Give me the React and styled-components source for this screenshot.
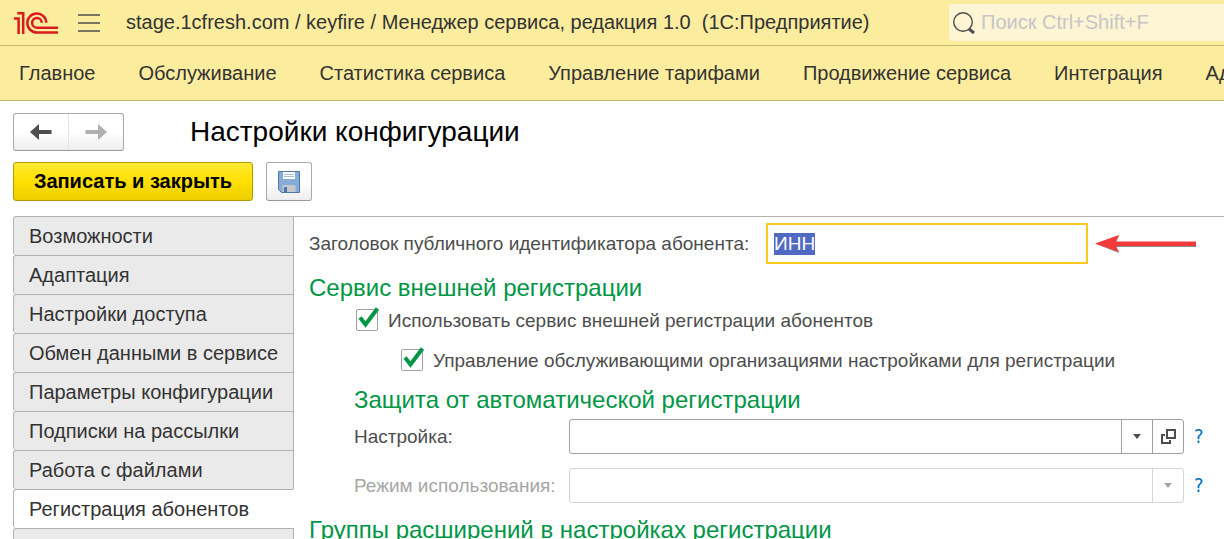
import { useEffect, useRef, useState } from "react";
import { createGlobalStyle, styled } from "styled-components";

const GlobalStyle = createGlobalStyle`
  * {
    box-sizing: border-box;
  }
  body {
    margin: 0;
    background: #fff;
    overflow: hidden;
  }
  body, button, input, select {
    font-family: "Liberation Sans", Arial, sans-serif;
    font-size: 20px;
    line-height: 23px;
    color: #333;
  }
  svg {
    display: block;
    flex-shrink: 0;
  }
`;

const Header = styled.header`
  display: flex;
  align-items: center;
  height: 46px;
  padding-left: 14px;
  background: #fbec9e;
  border-bottom: 1px solid #c6b869;
`;

const MenuButton = styled.button`
  margin: 0 26px 0 20px;
  padding: 0;
  border: 0;
  background: none;
`;

const AppTitle = styled.span`
  flex: 1;
  white-space: pre;
`;

const Search = styled.label`
  display: flex;
  align-items: center;
  gap: 6px;
  width: 275px;
  height: 37px;
  padding-left: 4px;
  background: #fdf5d3;
  border-radius: 3px 0 0 3px;
`;

const SearchInput = styled.input`
  flex: 1;
  min-width: 0;
  padding: 0;
  border: 0;
  outline: 0;
  background: none;
  &::placeholder {
    color: #c6c6c6;
  }
`;

const Sections = styled.nav`
  display: flex;
  align-items: center;
  gap: 43px;
  height: 55px;
  padding-left: 19px;
  overflow: hidden;
  background: #fbec9e;
  border-bottom: 1px solid #c6b869;
`;

const SectionLink = styled.a`
  color: #333;
  text-decoration: none;
  white-space: nowrap;
`;

const TitleBar = styled.div`
  display: flex;
  align-items: center;
  gap: 66px;
  padding: 12px 13px 11px;
`;

const History = styled.div`
  display: flex;
  width: 111px;
  height: 38px;
  border: 1px solid #aaa;
  border-bottom-color: #999;
  border-radius: 3px;
  background: linear-gradient(#fff 50%, #ededed);
`;

const HistoryButton = styled.button`
  display: flex;
  flex: 1;
  align-items: center;
  justify-content: center;
  padding: 0;
  border: 0;
  background: none;
  color: ${({ disabled }) => (disabled ? "#b0b0b0" : "#4d4d4d")};
  & + & {
    border-left: 1px solid #e4e4e4;
  }
`;

const PageTitle = styled.h1`
  margin: 0;
  font-size: 28px;
  font-weight: 400;
  line-height: 32px;
  color: #000;
`;

const Commands = styled.div`
  display: flex;
  gap: 13px;
  padding: 0 13px 15px;
`;

const SubmitButton = styled.button`
  width: 240px;
  height: 39px;
  padding: 0;
  border: 1px solid #b09c00;
  border-radius: 3px;
  background: linear-gradient(#ffe934, #ffe000 50%, #ecce00);
  font-weight: 700;
  color: #000;
`;

const SaveButton = styled.button`
  display: flex;
  align-items: center;
  justify-content: center;
  width: 46px;
  height: 39px;
  padding: 0;
  border: 1px solid #aaa;
  border-bottom-color: #999;
  border-radius: 3px;
  background: linear-gradient(#fff 50%, #ededed);
`;

const Body = styled.main`
  display: flex;
  padding-left: 13px;
`;

const Tabs = styled.div`
  display: flex;
  flex-direction: column;
  width: 281px;
  flex-shrink: 0;
`;

const Tab = styled.button`
  height: 39px;
  padding: 0 15px;
  border: solid #b1b1b1;
  border-width: 1px 1px 0;
  border-right-color: ${({ $active }) => ($active ? "#fff" : "#b1b1b1")};
  border-radius: 3px 0 0 3px;
  background: ${({ $active }) => ($active ? "#fff" : "#eaeaea")};
  text-align: left;
  white-space: nowrap;
`;

const Panel = styled.section`
  flex: 1;
  min-width: 0;
  padding: 6px 15px 0;
  border-top: 1px solid #b1b1b1;
  font-size: 19px;
  color: #4d4d4d;
`;

const Row = styled.div`
  display: flex;
  align-items: center;
`;

const TitleLabel = styled.label`
  min-width: 457px;
  white-space: nowrap;
`;

const TitleInput = styled.input`
  width: 322px;
  height: 41px;
  margin-right: 7px;
  padding: 0 6px;
  border: 2px solid #fcca1c;
  outline: 0;
  font-size: 19px;
  &::selection {
    background: #5069c3;
    color: #fff;
  }
`;

const GroupTitle = styled.h2`
  margin: 0;
  font-size: 24px;
  font-weight: 400;
  line-height: 24px;
  color: #009646;
`;

const Group = styled.div`
  padding: ${({ $indent }) => ($indent ? "8px 0 0 45px" : "12px 0 0")};
`;

const CheckLabel = styled.label`
  display: flex;
  align-items: center;
  gap: 10px;
  height: 40px;
  padding-left: ${({ $level }) => $level * 45}px;
`;

const CheckFrame = styled.span`
  display: grid;
  width: 24px;
  height: 24px;
  & > * {
    grid-area: 1 / 1;
  }
  & > svg {
    overflow: visible;
    pointer-events: none;
    visibility: hidden;
  }
  & > input:checked + svg {
    visibility: visible;
  }
`;

const CheckInput = styled.input`
  appearance: none;
  width: 22px;
  height: 22px;
  margin: 1px 0 0 2px;
  border: 1px solid #a0a0a0;
  border-radius: 2px;
  background: #fff;
`;

const FieldRow = styled.div`
  display: grid;
  grid-template-columns: 215px 1fr 25px;
  align-items: center;
  margin: ${({ $disabled }) => ($disabled ? "14px" : "7px")} 0 0;
  color: ${({ $disabled }) => ($disabled ? "#a6a6a6" : "#4d4d4d")};
`;

const Combo = styled.div`
  --line: ${({ $disabled }) => ($disabled ? "#d4d4d4" : "#a0a0a0")};
  display: grid;
  grid-template-columns: 1fr 31px ${({ $open }) => ($open ? "31px" : "")};
  height: 35px;
  border: 1px solid var(--line);
  border-radius: 3px;
`;

const ComboSelect = styled.select`
  grid-area: 1 / 1 / 2 / 3;
  appearance: none;
  min-width: 0;
  padding: 0 6px;
  border: 0;
  outline: 0;
  background: none;
`;

const ComboArrow = styled.span`
  grid-area: 1 / 2;
  display: flex;
  align-items: center;
  justify-content: center;
  border-left: 1px solid var(--line);
  pointer-events: none;
`;

const OpenButton = styled.button`
  grid-area: 1 / 3;
  display: flex;
  align-items: center;
  justify-content: center;
  padding: 0;
  border: 0;
  border-left: 1px solid var(--line);
  background: none;
`;

const HelpLink = styled.a`
  padding-left: 10px;
  font-family: "DejaVu Sans Condensed", "DejaVu Sans", sans-serif;
  font-size: 20px;
  color: #0072bc;
  text-decoration: none;
`;

const NextGroup = styled.div`
  padding-top: 15px;
`;

const sections = [
  "Главное",
  "Обслуживание",
  "Статистика сервиса",
  "Управление тарифами",
  "Продвижение сервиса",
  "Интеграция",
  "Администрирование",
];

const tabs = [
  "Возможности",
  "Адаптация",
  "Настройки доступа",
  "Обмен данными в сервисе",
  "Параметры конфигурации",
  "Подписки на рассылки",
  "Работа с файлами",
  "Регистрация абонентов",
  "",
];

function Logo() {
  return (
    <svg width="44" height="22" viewBox="0 0 44 22" fill="none" stroke="#d91a21" strokeWidth="2.5">
      <path d="M3.300 1.300H9.200V22M0 6.400H4.600V22" />
      <path d="M32.300 10.800A9.500 9.500 0 1 0 22.800 20.500H44" />
      <path d="M27.700 10.800A4.800 4.800 0 1 0 22.800 15.700H44" />
    </svg>
  );
}

function Arrow({ back }) {
  return (
    <svg width="22" height="16" viewBox="0 0 22 16" fill="currentColor">
      <path d={back ? "M0 8 9 0V6H21.500V10H9V16Z" : "M22 8 13 0V6H.5V10H13V16Z"} />
    </svg>
  );
}

function Floppy() {
  return (
    <svg width="22" height="22" viewBox="0 0 22 22">
      <path d="M.5.5H21.500V21.500H3.500L.5 18.500Z" fill="#86abd9" stroke="#4e76a8" />
      <path d="M5 1H17V8H5Z" fill="#fff" />
      <path d="M6 3.500H16M6 5.500H16" stroke="#a9bdd6" />
      <path d="M4.500 14H17.500V21H4.500Z" fill="#c4c8cc" />
      <path d="M6 16H9V21H6Z" fill="#4e76a8" />
    </svg>
  );
}

function Check({ level, children }) {
  const [checked, setChecked] = useState(true);
  return (
    <CheckLabel $level={level}>
      <CheckFrame>
        <CheckInput type="checkbox" checked={checked} onChange={() => setChecked(!checked)} />
        <svg width="24" height="24" viewBox="0 0 24 24" fill="none" stroke="#009646" strokeWidth="4">
          <path d="M6 9.500 11.500 16.500 23.500.500" />
        </svg>
      </CheckFrame>
      {children}
    </CheckLabel>
  );
}

function ComboField({ id, label, disabled, open }) {
  return (
    <FieldRow $disabled={disabled}>
      <label htmlFor={id}>{label}</label>
      <Combo $disabled={disabled} $open={open}>
        <ComboSelect id={id} disabled={disabled} />
        <ComboArrow>
          <svg width="8" height="5" viewBox="0 0 8 5" fill={disabled ? "#a6a6a6" : "#4d4d4d"}>
            <path d="M0 0H8L4 5Z" />
          </svg>
        </ComboArrow>
        {open && (
          <OpenButton aria-label="Открыть">
            <svg width="15" height="15" viewBox="0 0 15 15" fill="none" stroke="#4d4d4d" strokeWidth="2">
              <path d="M6 1H14V9H6ZM4 6H1V14H9V11" />
            </svg>
          </OpenButton>
        )}
      </Combo>
      <HelpLink href="#help">?</HelpLink>
    </FieldRow>
  );
}

function App() {
  const [active, setActive] = useState(7);
  const titleRef = useRef(null);

  useEffect(() => {
    titleRef.current.focus();
    titleRef.current.select();
  }, []);

  return (
    <>
      <GlobalStyle />
      <Header>
        <Logo />
        <MenuButton aria-label="Меню">
          <svg width="22" height="18" viewBox="0 0 22 18" stroke="#4d4d4d" strokeWidth="1.500">
            <path d="M0 1H22M0 9H22M0 17H22" />
          </svg>
        </MenuButton>
        <AppTitle>stage.1cfresh.com / keyfire / Менеджер сервиса, редакция 1.0  (1С:Предприятие)</AppTitle>
        <Search>
          <svg width="22" height="22" viewBox="0 0 22 22" fill="none" stroke="#4d4d4d">
            <circle cx="10" cy="10" r="9.300" strokeWidth="1.400" />
            <path d="M16 17 21 21" strokeWidth="3" />
          </svg>
          <SearchInput aria-label="Поиск" placeholder="Поиск Ctrl+Shift+F" />
        </Search>
      </Header>
      <Sections>
        {sections.map((name) => (
          <SectionLink key={name} href="#section">
            {name}
          </SectionLink>
        ))}
      </Sections>
      <TitleBar>
        <History>
          <HistoryButton aria-label="Назад">
            <Arrow back />
          </HistoryButton>
          <HistoryButton aria-label="Вперед" disabled>
            <Arrow />
          </HistoryButton>
        </History>
        <PageTitle>Настройки конфигурации</PageTitle>
      </TitleBar>
      <Commands>
        <SubmitButton>Записать и закрыть</SubmitButton>
        <SaveButton aria-label="Записать">
          <Floppy />
        </SaveButton>
      </Commands>
      <Body>
        <Tabs>
          {tabs.map((name, i) => (
            <Tab key={i} $active={i === active} onClick={() => setActive(i)}>
              {name}
            </Tab>
          ))}
        </Tabs>
        <Panel>
          <Row>
            <TitleLabel htmlFor="publicId">Заголовок публичного идентификатора абонента:</TitleLabel>
            <TitleInput id="publicId" ref={titleRef} defaultValue="ИНН" />
            <svg width="102" height="18" viewBox="0 0 102 18">
              <path d="M1 9 24 1 21 7H101V12H21L24 18Z" fill="#8c8c8c" />
              <path d="M0 8.500 24 0 21 6.500H101V11H21L24 17Z" fill="#f43b3b" />
            </svg>
          </Row>
          <Group>
            <GroupTitle>Сервис внешней регистрации</GroupTitle>
          </Group>
          <Check level={1}>Использовать сервис внешней регистрации абонентов</Check>
          <Check level={2}>Управление обслуживающими организациями настройками для регистрации</Check>
          <Group $indent>
            <GroupTitle>Защита от автоматической регистрации</GroupTitle>
            <ComboField id="preset" label="Настройка:" open />
            <ComboField id="mode" label="Режим использования:" disabled />
          </Group>
          <NextGroup>
            <GroupTitle>Группы расширений в настройках регистрации</GroupTitle>
          </NextGroup>
        </Panel>
      </Body>
    </>
  );
}

export default App;
